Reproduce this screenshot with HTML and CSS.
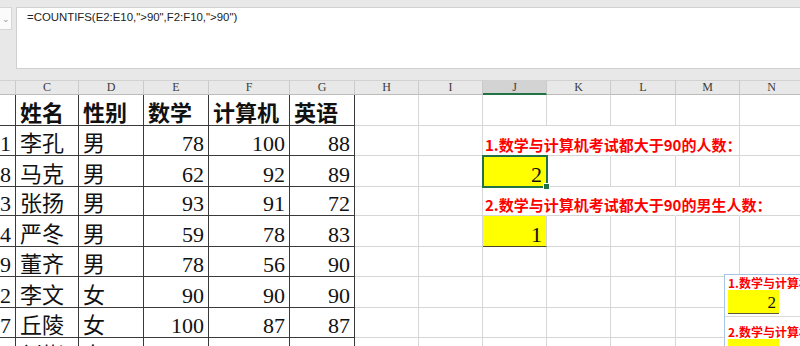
FILE: index.html
```html
<!DOCTYPE html>
<html lang="zh">
<head>
<meta charset="utf-8">
<title>COUNTIFS</title>
<link rel="stylesheet" href="styles.css">
</head>
<body>
<div class="top">
  <div class="namebox"><span class="nb-mark">⌄</span></div>
  <div class="formula">=COUNTIFS(E2:E10,"&gt;90",F2:F10,"&gt;90")</div>
</div>
<div class="sheet">
  <div class="h"></div><div class="h">C</div><div class="h">D</div><div class="h">E</div><div class="h">F</div><div class="h">G</div><div class="h">H</div><div class="h">I</div><div class="h sel">J</div><div class="h">K</div><div class="h">L</div><div class="h">M</div><div class="h">N</div>

  <div class="c t"></div><div class="c t cn hd">姓名</div><div class="c t cn hd">性别</div><div class="c t cn hd">数学</div><div class="c t cn hd">计算机</div><div class="c t cn hd">英语</div><div class="c"></div><div class="c"></div><div class="c"></div><div class="c"></div><div class="c"></div><div class="c"></div><div class="c"></div>

  <div class="c t n">1</div><div class="c t cn">李孔</div><div class="c t cn">男</div><div class="c t n">78</div><div class="c t n">100</div><div class="c t n">88</div><div class="c"></div><div class="c"></div><div class="c nr spill"><span class="red">1.数学与计算机考试都大于90的人数：</span></div><div class="c nr"></div><div class="c nr"></div><div class="c"></div><div class="c"></div>

  <div class="c t n">8</div><div class="c t cn">马克</div><div class="c t cn">男</div><div class="c t n">62</div><div class="c t n">92</div><div class="c t n">89</div><div class="c"></div><div class="c"></div><div class="c n yellow active">2</div><div class="c"></div><div class="c"></div><div class="c"></div><div class="c"></div>

  <div class="c t n">3</div><div class="c t cn">张扬</div><div class="c t cn">男</div><div class="c t n">93</div><div class="c t n">91</div><div class="c t n">72</div><div class="c"></div><div class="c"></div><div class="c nr spill"><span class="red">2.数学与计算机考试都大于90的男生人数：</span></div><div class="c nr"></div><div class="c nr"></div><div class="c nr"></div><div class="c"></div>

  <div class="c t n">4</div><div class="c t cn">严冬</div><div class="c t cn">男</div><div class="c t n">59</div><div class="c t n">78</div><div class="c t n">83</div><div class="c"></div><div class="c"></div><div class="c n yellow under">1</div><div class="c"></div><div class="c"></div><div class="c"></div><div class="c"></div>

  <div class="c t n">9</div><div class="c t cn">董齐</div><div class="c t cn">男</div><div class="c t n">78</div><div class="c t n">56</div><div class="c t n">90</div><div class="c"></div><div class="c"></div><div class="c"></div><div class="c"></div><div class="c"></div><div class="c"></div><div class="c"></div>

  <div class="c t n">2</div><div class="c t cn">李文</div><div class="c t cn">女</div><div class="c t n">90</div><div class="c t n">90</div><div class="c t n">90</div><div class="c"></div><div class="c"></div><div class="c"></div><div class="c"></div><div class="c"></div><div class="c"></div><div class="c"></div>

  <div class="c t n">7</div><div class="c t cn">丘陵</div><div class="c t cn">女</div><div class="c t n">100</div><div class="c t n">87</div><div class="c t n">87</div><div class="c"></div><div class="c"></div><div class="c"></div><div class="c"></div><div class="c"></div><div class="c"></div><div class="c"></div>

  <div class="c t n">5</div><div class="c t cn">刘彬</div><div class="c t cn">女</div><div class="c t n">88</div><div class="c t n">95</div><div class="c t n">86</div><div class="c"></div><div class="c"></div><div class="c"></div><div class="c"></div><div class="c"></div><div class="c"></div><div class="c"></div>
</div>

<div class="pic">
  <div class="p-line"><span class="p-red">1.数学与计算机考试都大于90的人数：</span></div>
  <div class="p-row"><div class="p-yellow">2</div></div>
  <div class="p-line p-line2"><span class="p-red">2.数学与计算机考试都大于90的男生人数：</span></div>
  <div class="p-row"><div class="p-yellow">1</div></div>
</div>
</body>
</html>
```

FILE: styles.css
```css
html, body {
  margin: 0;
  padding: 0;
}
body {
  width: 800px;
  height: 346px;
  overflow: hidden;
  background: #ffffff;
  font-family: "Liberation Serif", "Noto Sans CJK SC", serif;
  position: relative;
}

/* formula area */
.top {
  height: 80px;
  box-sizing: border-box;
  padding-top: 7px;
  background: #e8e8e8;
  display: flex;
  align-items: flex-start;
}
.namebox {
  width: 12px;
  height: 23px;
  background: #fbfbfb;
  border: 1px solid #d6d6d6;
  border-left: none;
  box-sizing: border-box;
  display: flex;
  align-items: center;
  justify-content: center;
  overflow: hidden;
}
.nb-mark {
  font: 9px "Liberation Sans", sans-serif;
  color: #9a9a9a;
}
.formula {
  margin-left: 4px;
  flex: 1;
  height: 62px;
  box-sizing: border-box;
  background: #ffffff;
  border: 1px solid #d0d0d0;
  border-right: none;
  padding: 3px 0 0 10px;
  font: 11.4px "Liberation Sans", "Noto Sans CJK SC", sans-serif;
  color: #222;
  white-space: nowrap;
}

/* sheet grid */
.sheet {
  display: grid;
  grid-template-columns: 16px 63px 65px 65px 81px 65px 64px 64px 64px 64px 65px 64px 64px;
  grid-template-rows: 15px 31px 30px 31px 29px 31px 30px 31px 30px 30px;
  width: 804px;
}
.h {
  background: #e8e8e8;
  border-right: 1px solid #cacaca;
  border-bottom: 1px solid #bcbcbc;
  border-top: 1px solid #d2d2d2;
  box-sizing: border-box;
  font: 12px "Liberation Serif", serif;
  color: #3c3c3c;
  text-align: center;
  line-height: 13px;
}
.h.sel {
  background: #d3d3d3;
  border-bottom: 2px solid #217346;
}

.c {
  box-sizing: border-box;
  border-right: 1px solid #d6d6d6;
  border-bottom: 1px solid #d6d6d6;
  display: flex;
  align-items: flex-end;
  white-space: nowrap;
  font-size: 22px;
  line-height: 22px;
  color: #111;
  position: relative;
}
.c.t {
  border-color: #3a3a3a;
}
.c.nr {
  border-right-color: transparent;
}
.cn {
  font-family: "Noto Sans CJK SC", sans-serif;
  padding: 0 0 3px 4px;
  line-height: 22px;
}
.cn.hd {
  font-weight: 700;
}
.n {
  justify-content: flex-end;
  padding-right: 4px;
  font-family: "Liberation Serif", serif;
}

.spill {
  z-index: 1;
}
.red {
  font: 700 15px "Noto Sans CJK SC", sans-serif;
  color: #ff0000;
  line-height: 18px;
  padding-left: 2px;
  padding-bottom: 1px;
}

.yellow {
  background: #ffff00;
}
.yellow.under {
  border-bottom-color: #4a4a2a;
}
.active {
  outline: 2px solid #217346;
  outline-offset: -1px;
  z-index: 2;
}
.active::after {
  content: "";
  position: absolute;
  right: -4px;
  bottom: -4px;
  width: 5px;
  height: 5px;
  background: #217346;
  border: 1px solid #ffffff;
}

/* floating picture */
.pic {
  position: absolute;
  left: 724px;
  top: 274px;
  width: 100px;
  height: 90px;
  background: #ffffff;
  border: 1px solid #a8c5e6;
  box-sizing: border-box;
  overflow: hidden;
  z-index: 5;
}
.p-line {
  height: 15px;
  display: flex;
  align-items: flex-end;
  padding-left: 3px;
  white-space: nowrap;
}
.p-line2 {
  height: 22px;
}
.p-red {
  font: 700 12px "Noto Sans CJK SC", sans-serif;
  color: #ff0000;
  line-height: 14px;
}
.p-row {
  height: 27px;
  border-bottom: 1px solid #dadada;
  box-sizing: border-box;
}
.p-yellow {
  margin-left: 3px;
  width: 51px;
  height: 24px;
  box-sizing: border-box;
  background: #ffff00;
  border-bottom: 1px solid #5a5a3a;
  font: 17px "Liberation Serif", serif;
  color: #111;
  text-align: right;
  padding-right: 3px;
  line-height: 26px;
}
```
